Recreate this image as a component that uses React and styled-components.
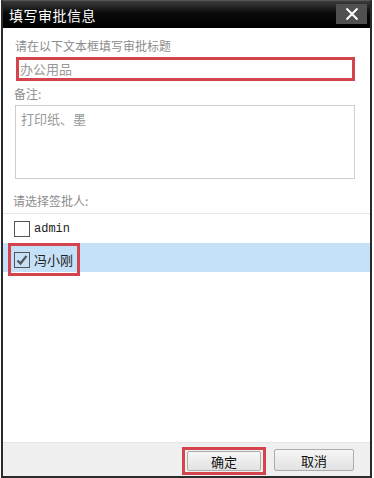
import React from "react";
import styled, { createGlobalStyle } from "styled-components";

const Global = createGlobalStyle`
  html, body { margin: 0; padding: 0; background: #ffffff; }
  body { font-family: "Noto Sans CJK SC", "Noto Sans", sans-serif; }
`;

const Dialog = styled.div`
  margin-left: 1px;
  width: 371px;
  height: 478px;
  box-sizing: border-box;
  border: 2px solid #2b2b2b;
  border-top: 1px solid #555;
  display: flex;
  flex-direction: column;
  background: #fff;
`;

const TitleBar = styled.div`
  height: 27px;
  flex: none;
  display: flex;
  align-items: center;
  justify-content: space-between;
  padding: 0 3px 0 6px;
  background: linear-gradient(#3c3c3c, #0a0a0a 45%, #000);
`;

const Title = styled.span`
  color: #fff;
  font-size: 14px;
  letter-spacing: 0.5px;
`;

const CloseButton = styled.div`
  width: 31px;
  height: 20px;
  background: #505050;
  display: flex;
  align-items: center;
  justify-content: center;
  margin-top: -2px;
`;

const Body = styled.div`
  flex: 1;
  display: flex;
  flex-direction: column;
  padding-top: 10px;
`;

const Label = styled.div`
  font-size: 12px;
  color: #8c8c8c;
  padding-left: ${(p) => p.$pl || 11}px;
  line-height: 16px;
`;

const TitleInput = styled.div`
  margin: 3px 15px 5px 13px;
  height: 24px;
  box-sizing: border-box;
  border: 3px solid #d4444d;
  font-size: 13px;
  color: #999;
  padding-left: 1px;
  line-height: 18px;
`;

const TextArea = styled.div`
  margin: 3px 15px 14px 12px;
  height: 74px;
  box-sizing: border-box;
  border: 1px solid #cfcfcf;
  font-size: 13px;
  color: #999;
  padding: 5px 0 0 5px;
  line-height: 16px;
`;

const Separator = styled.div`
  height: 1px;
  background: #e6e6e6;
  margin-top: 4px;
`;

const Row = styled.div`
  height: 29px;
  display: flex;
  align-items: center;
  padding-left: 11px;
  background: ${(p) => (p.$selected ? "#c5e1f8" : "transparent")};
`;

const Highlight = styled.div`
  display: flex;
  align-items: center;
  margin-left: -6px;
  margin-top: 4px;
  padding: 0 4px 0 3px;
  border: 3px solid #d4444d;
  height: 33px;
  box-sizing: border-box;
`;

const Box = styled.div`
  width: 14px;
  height: 14px;
  border: 1px solid #555;
  background: ${(p) => (p.$checked ? "transparent" : "#fff")};
  display: flex;
  align-items: center;
  justify-content: center;
  margin-right: 4px;
`;

const Name = styled.span`
  font-size: ${(p) => (p.$mono ? 12 : 13)}px;
  font-family: ${(p) =>
    p.$mono ? '"Liberation Mono", "DejaVu Sans Mono", monospace' : '"Noto Sans CJK SC", sans-serif'};
  color: #222;
`;

const Spacer = styled.div`
  flex: 1;
`;

const Footer = styled.div`
  height: 34px;
  box-sizing: border-box;
  flex: none;
  background: #f0f0f0;
  border-top: 1px solid #e4e4e4;
  display: flex;
  align-items: flex-start;
  justify-content: flex-end;
  gap: 8px;
  padding: 4px 16px 0 0;
`;

const RedFrame = styled.div`
  border: 3px solid #d4444d;
  padding: 1px 2px;
`;

const Button = styled.div`
  width: ${(p) => p.$w}px;
  height: ${(p) => p.$h}px;
  box-sizing: border-box;
  border: 1px solid #acacac;
  border-radius: 2px;
  background: linear-gradient(#f6f6f6, #e2e2e2);
  display: flex;
  align-items: center;
  justify-content: center;
  font-size: 13px;
  color: #111;
  margin-top: ${(p) => p.$mt || 0}px;
`;

const Check = () => (
  <svg width="14" height="14" viewBox="0 0 14 14">
    <path d="M2.5 7.5 L5.5 10.5 L11.5 3" stroke="#555" strokeWidth="2.2" fill="none" />
  </svg>
);

const CloseIcon = () => (
  <svg width="14" height="14" viewBox="0 0 14 14">
    <path d="M1.5 1.5 L12.5 12.5 M12.5 1.5 L1.5 12.5" stroke="#fff" strokeWidth="2" />
  </svg>
);

export default function App() {
  return (
    <>
      <Global />
      <Dialog>
        <TitleBar>
          <Title>填写审批信息</Title>
          <CloseButton>
            <CloseIcon />
          </CloseButton>
        </TitleBar>
        <Body>
          <Label $pl={12}>请在以下文本框填写审批标题</Label>
          <TitleInput>办公用品</TitleInput>
          <Label>备注:</Label>
          <TextArea>打印纸、墨</TextArea>
          <Label $pl={10}>请选择签批人:</Label>
          <Separator />
          <Row>
            <Box />
            <Name $mono>admin</Name>
          </Row>
          <Row $selected>
            <Highlight>
              <Box $checked>
                <Check />
              </Box>
              <Name>冯小刚</Name>
            </Highlight>
          </Row>
          <Spacer />
          <Footer>
            <RedFrame>
              <Button $w={74} $h={20}>确定</Button>
            </RedFrame>
            <Button $w={80} $h={22} $mt={2}>取消</Button>
          </Footer>
        </Body>
      </Dialog>
    </>
  );
}
